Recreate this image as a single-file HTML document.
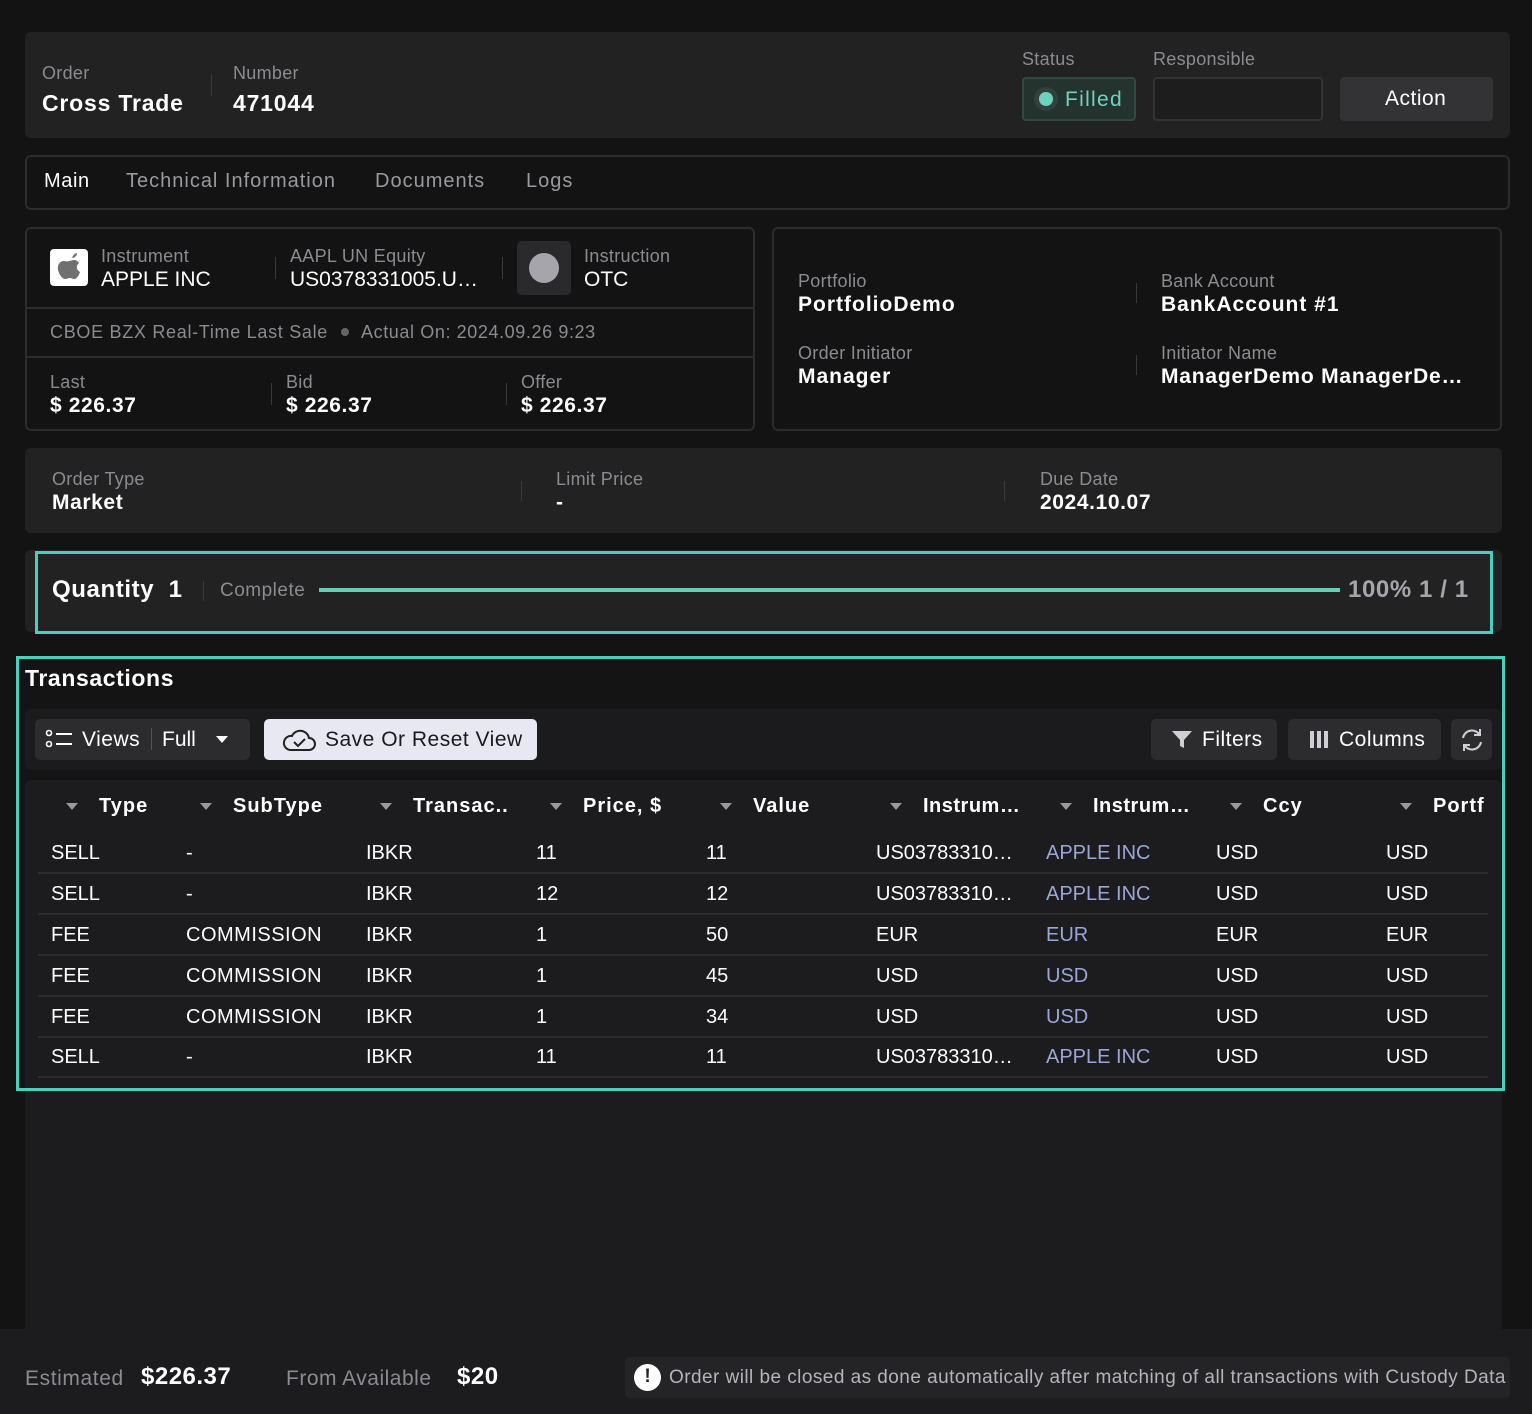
<!DOCTYPE html>
<html><head><meta charset="utf-8"><style>
*{margin:0;padding:0;box-sizing:border-box}
body{width:1532px;height:1414px;background:#131313;font-family:"Liberation Sans",sans-serif;color:#fff;position:relative;overflow:hidden}
.a{position:absolute}
.t{position:absolute;white-space:nowrap;line-height:1}
.l{color:#8b8b90;font-size:18px;letter-spacing:0.3px}
.v{font-weight:bold;font-size:21px;color:#fff;letter-spacing:0.6px}
.sep{position:absolute;width:1px;background:#3a3a3d}
.h{font-weight:bold;font-size:20px;color:#fff;letter-spacing:1px}
.c{font-size:20px;color:#fff}
.lk{color:#9aa6d8}
.arr{position:absolute;width:0;height:0;border-left:6px solid transparent;border-right:6px solid transparent;border-top:7px solid #9a9a9e}
.rl{position:absolute;left:38px;width:1450px;height:2px;background:#2c2c2f}
.tab{font-size:20px;color:#9a9a9e;letter-spacing:0.6px}
</style></head><body>
<!-- header -->
<div class="a" style="left:25px;top:32px;width:1485px;height:106px;background:#222;border-radius:6px"></div>
<div class="t l" style="left:42px;top:64px">Order</div>
<div class="t v" style="left:42px;top:92px;font-size:23px;letter-spacing:0.8px">Cross Trade</div>
<div class="sep" style="left:211px;top:74px;height:22px"></div>
<div class="t l" style="left:233px;top:64px">Number</div>
<div class="t v" style="left:233px;top:92px;font-size:23px;letter-spacing:0.8px">471044</div>
<div class="t l" style="left:1022px;top:50px">Status</div>
<div class="t l" style="left:1153px;top:50px">Responsible</div>
<div class="a" style="left:1022px;top:77px;width:114px;height:44px;background:#25332f;border:2px solid #2f4a43;border-radius:4px"></div>
<div class="a" style="left:1034px;top:87px;width:24px;height:24px;border-radius:50%;background:#31413d"></div>
<div class="a" style="left:1039px;top:92px;width:14px;height:14px;border-radius:50%;background:#6dd3c0"></div>
<div class="t" style="left:1065px;top:89px;font-size:21px;color:#6dd3c0;letter-spacing:1.3px">Filled</div>
<div class="a" style="left:1153px;top:77px;width:170px;height:44px;border:2px solid #333;border-radius:4px;background:#1d1d1d"></div>
<div class="a" style="left:1340px;top:77px;width:153px;height:44px;background:#333335;border-radius:4px"></div>
<div class="t" style="left:1385px;top:88px;font-size:21px;color:#fff;letter-spacing:0.5px">Action</div>
<!-- tabs -->
<div class="a" style="left:25px;top:155px;width:1485px;height:55px;border:2px solid #2c2c2c;border-radius:6px"></div>
<div class="t tab" style="left:44px;top:171px;color:#fff">Main</div>
<div class="t tab" style="left:126px;top:171px;letter-spacing:1px">Technical Information</div>
<div class="t tab" style="left:375px;top:171px;letter-spacing:1px">Documents</div>
<div class="t tab" style="left:526px;top:171px;letter-spacing:1px">Logs</div>
<!-- instrument box -->
<div class="a" style="left:25px;top:227px;width:730px;height:204px;border:2px solid #2c2c2c;border-radius:6px"></div>
<div class="a" style="left:27px;top:307px;width:726px;height:2px;background:#2c2c2c"></div>
<div class="a" style="left:27px;top:356px;width:726px;height:2px;background:#2c2c2c"></div>
<div class="a" style="left:50px;top:249px;width:38px;height:37px;background:#fff;border-radius:4px"></div>
<svg class="a" style="left:52px;top:250px" width="34" height="35" viewBox="0 0 34 35"><path d="M21 6c1-2 3-3 4-3 0 2-1 4-4 5-1 0-1-1 0-2z M17 11c2 0 3-1 5-1 2 0 4 1 5 3-3 2-3 7 1 9-1 3-3 7-6 7-2 0-2-1-4-1s-3 1-5 1c-3 0-6-5-7-9-1-5 2-9 6-9 2 0 3 1 5 0z" fill="#707070"/></svg>
<div class="t l" style="left:101px;top:247px">Instrument</div>
<div class="t" style="left:101px;top:269px;font-size:21px">APPLE INC</div>
<div class="sep" style="left:275px;top:257px;height:22px"></div>
<div class="t l" style="left:290px;top:247px">AAPL UN Equity</div>
<div class="t" style="left:290px;top:269px;font-size:21px">US0378331005.U…</div>
<div class="sep" style="left:502px;top:257px;height:22px"></div>
<div class="a" style="left:517px;top:241px;width:54px;height:54px;background:#2a2a2c;border-radius:5px"></div>
<div class="a" style="left:529px;top:253px;width:30px;height:30px;background:#a5a5ab;border-radius:50%"></div>
<div class="t l" style="left:584px;top:247px">Instruction</div>
<div class="t" style="left:584px;top:269px;font-size:21px">OTC</div>
<div class="t l" style="left:50px;top:323px;letter-spacing:0.7px">CBOE BZX Real-Time Last Sale</div>
<div class="a" style="left:341px;top:328px;width:8px;height:8px;border-radius:50%;background:#666"></div>
<div class="t l" style="left:361px;top:323px;letter-spacing:0.6px">Actual On: 2024.09.26 9:23</div>
<div class="t l" style="left:50px;top:373px">Last</div>
<div class="t v" style="left:50px;top:395px">$ 226.37</div>
<div class="sep" style="left:271px;top:383px;height:22px"></div>
<div class="t l" style="left:286px;top:373px">Bid</div>
<div class="t v" style="left:286px;top:395px">$ 226.37</div>
<div class="sep" style="left:506px;top:383px;height:22px"></div>
<div class="t l" style="left:521px;top:373px">Offer</div>
<div class="t v" style="left:521px;top:395px">$ 226.37</div>
<!-- portfolio box -->
<div class="a" style="left:772px;top:227px;width:730px;height:204px;border:2px solid #2c2c2c;border-radius:6px"></div>
<div class="t l" style="left:798px;top:272px">Portfolio</div>
<div class="t v" style="left:798px;top:294px;letter-spacing:1px">PortfolioDemo</div>
<div class="sep" style="left:1136px;top:283px;height:20px"></div>
<div class="t l" style="left:1161px;top:272px">Bank Account</div>
<div class="t v" style="left:1161px;top:294px;letter-spacing:1px">BankAccount #1</div>
<div class="t l" style="left:798px;top:344px">Order Initiator</div>
<div class="t v" style="left:798px;top:366px;letter-spacing:1px">Manager</div>
<div class="sep" style="left:1136px;top:355px;height:20px"></div>
<div class="t l" style="left:1161px;top:344px">Initiator Name</div>
<div class="t v" style="left:1161px;top:366px;letter-spacing:0.8px">ManagerDemo ManagerDe…</div>
<!-- order type -->
<div class="a" style="left:25px;top:448px;width:1477px;height:85px;background:#222;border-radius:6px"></div>
<div class="t l" style="left:52px;top:470px">Order Type</div>
<div class="t v" style="left:52px;top:492px">Market</div>
<div class="sep" style="left:521px;top:481px;height:20px"></div>
<div class="t l" style="left:556px;top:470px">Limit Price</div>
<div class="t v" style="left:556px;top:492px">-</div>
<div class="sep" style="left:1004px;top:481px;height:20px"></div>
<div class="t l" style="left:1040px;top:470px">Due Date</div>
<div class="t v" style="left:1040px;top:492px">2024.10.07</div>
<!-- quantity -->
<div class="a" style="left:25px;top:550px;width:1477px;height:82px;background:#222;border-radius:6px"></div>
<div class="a" style="left:35px;top:551px;width:1458px;height:83px;border:3px solid #4ecdbd"></div>
<div class="t" style="left:52px;top:578px;font-size:24px;font-weight:bold;letter-spacing:0.6px">Quantity&nbsp;&nbsp;1</div>
<div class="sep" style="left:203px;top:581px;height:20px"></div>
<div class="t l" style="left:220px;top:581px;font-size:19px;letter-spacing:0.5px">Complete</div>
<div class="a" style="left:319px;top:588px;width:1021px;height:4px;background:#6dc9b6"></div>
<div class="t" style="left:1348px;top:578px;font-size:24px;font-weight:bold;color:#a5a5ab;letter-spacing:0.6px">100% 1 / 1</div>
<!-- lower panel bg -->
<div class="a" style="left:25px;top:1090px;width:1477px;height:260px;background:#1c1c1e"></div>
<!-- transactions -->
<div class="a" style="left:16px;top:656px;width:1489px;height:435px;border:3px solid #4ecdbd;background:#141414"></div>
<div class="t" style="left:25px;top:667px;font-size:23px;font-weight:bold;letter-spacing:0.6px">Transactions</div>
<div class="a" style="left:25px;top:709px;width:1477px;height:61px;background:#1b1b1d;border-radius:6px"></div>
<div class="a" style="left:35px;top:719px;width:215px;height:41px;background:#2c2c2e;border-radius:5px"></div>
<svg class="a" style="left:45px;top:729px" width="30" height="22" viewBox="0 0 30 22"><circle cx="4" cy="4" r="2.5" fill="none" stroke="#fff" stroke-width="1.6"/><circle cx="4" cy="15" r="2.5" fill="none" stroke="#fff" stroke-width="1.6"/><path d="M11 5h16M11 15h16" stroke="#fff" stroke-width="2"/></svg>
<div class="t" style="left:82px;top:729px;font-size:21px;letter-spacing:0.5px">Views</div>
<div class="sep" style="left:151px;top:728px;height:22px;background:#555"></div>
<div class="t" style="left:162px;top:729px;font-size:21px">Full</div>
<div class="arr" style="left:216px;top:736px;border-top-color:#fff"></div>
<div class="a" style="left:264px;top:719px;width:273px;height:41px;background:#e8e8f3;border-radius:5px"></div>
<svg class="a" style="left:281px;top:726px" width="36" height="28" viewBox="0 0 36 28"><path d="M9 24h19a6 6 0 0 0 0-12 9 9 0 0 0-17-2A7 7 0 0 0 9 24z" fill="none" stroke="#222" stroke-width="2"/><path d="M13 16l4 4 7-7" fill="none" stroke="#222" stroke-width="2"/></svg>
<div class="t" style="left:325px;top:729px;font-size:21px;color:#1a1a1a;letter-spacing:0.5px">Save Or Reset View</div>
<div class="a" style="left:1151px;top:719px;width:126px;height:41px;background:#2c2c2e;border-radius:5px"></div>
<svg class="a" style="left:1171px;top:730px" width="22" height="20" viewBox="0 0 22 20"><path d="M1 1h20l-8 9v8l-4 -2v-6z" fill="#cfcfd3"/></svg>
<div class="t" style="left:1202px;top:729px;font-size:21px;letter-spacing:0.5px">Filters</div>
<div class="a" style="left:1288px;top:719px;width:153px;height:41px;background:#2c2c2e;border-radius:5px"></div>
<svg class="a" style="left:1309px;top:730px" width="20" height="19" viewBox="0 0 20 19"><rect x="1" y="1" width="4" height="17" fill="#cfcfd3"/><rect x="8" y="1" width="4" height="17" fill="#cfcfd3"/><rect x="15" y="1" width="4" height="17" fill="#cfcfd3"/></svg>
<div class="t" style="left:1339px;top:729px;font-size:21px;letter-spacing:0.5px">Columns</div>
<div class="a" style="left:1451px;top:719px;width:41px;height:41px;background:#2c2c2e;border-radius:5px"></div>
<svg class="a" style="left:1459px;top:727px" width="26" height="26" viewBox="0 0 26 26"><path d="M4 11a9 9 0 0 1 16-4M22 15a9 9 0 0 1-16 4" fill="none" stroke="#cfcfd3" stroke-width="2"/><path d="M21 2v6h-6M5 24v-6h6" fill="none" stroke="#cfcfd3" stroke-width="2"/></svg>
<!-- table -->
<div class="a" style="left:25px;top:780px;width:1477px;height:550px;background:#1c1c1e;border-radius:6px 6px 0 0"></div>
<div class="a" style="left:16px;top:780px;width:3px;height:311px;background:#4ecdbd"></div>
<div class="a" style="left:1502px;top:780px;width:3px;height:311px;background:#4ecdbd"></div>
<div class="a" style="left:16px;top:1088px;width:1489px;height:3px;background:#4ecdbd"></div>
<div class="arr" style="left:66px;top:803px"></div><div class="t h" style="left:99px;top:796px">Type</div>
<div class="arr" style="left:200px;top:803px"></div><div class="t h" style="left:233px;top:796px">SubType</div>
<div class="arr" style="left:380px;top:803px"></div><div class="t h" style="left:413px;top:796px">Transac..</div>
<div class="arr" style="left:550px;top:803px"></div><div class="t h" style="left:583px;top:796px">Price, $</div>
<div class="arr" style="left:720px;top:803px"></div><div class="t h" style="left:753px;top:796px">Value</div>
<div class="arr" style="left:890px;top:803px"></div><div class="t h" style="left:923px;top:796px;letter-spacing:0.5px">Instrum…</div>
<div class="arr" style="left:1060px;top:803px"></div><div class="t h" style="left:1093px;top:796px;letter-spacing:0.5px">Instrum…</div>
<div class="arr" style="left:1230px;top:803px"></div><div class="t h" style="left:1263px;top:796px">Ccy</div>
<div class="arr" style="left:1400px;top:803px"></div><div class="t h" style="left:1433px;top:796px">Portf</div>

<div class="t c" style="left:51px;top:843px">SELL</div><div class="t c" style="left:186px;top:843px">-</div><div class="t c" style="left:366px;top:843px">IBKR</div><div class="t c" style="left:536px;top:843px">11</div><div class="t c" style="left:706px;top:843px">11</div><div class="t c" style="left:876px;top:843px">US03783310…</div><div class="t c lk" style="left:1046px;top:843px">APPLE INC</div><div class="t c" style="left:1216px;top:843px">USD</div><div class="t c" style="left:1386px;top:843px">USD</div>
<div class="rl" style="top:872px"></div>
<div class="t c" style="left:51px;top:884px">SELL</div><div class="t c" style="left:186px;top:884px">-</div><div class="t c" style="left:366px;top:884px">IBKR</div><div class="t c" style="left:536px;top:884px">12</div><div class="t c" style="left:706px;top:884px">12</div><div class="t c" style="left:876px;top:884px">US03783310…</div><div class="t c lk" style="left:1046px;top:884px">APPLE INC</div><div class="t c" style="left:1216px;top:884px">USD</div><div class="t c" style="left:1386px;top:884px">USD</div>
<div class="rl" style="top:913px"></div>
<div class="t c" style="left:51px;top:925px">FEE</div><div class="t c" style="left:186px;top:925px;letter-spacing:0.5px">COMMISSION</div><div class="t c" style="left:366px;top:925px">IBKR</div><div class="t c" style="left:536px;top:925px">1</div><div class="t c" style="left:706px;top:925px">50</div><div class="t c" style="left:876px;top:925px">EUR</div><div class="t c lk" style="left:1046px;top:925px">EUR</div><div class="t c" style="left:1216px;top:925px">EUR</div><div class="t c" style="left:1386px;top:925px">EUR</div>
<div class="rl" style="top:954px"></div>
<div class="t c" style="left:51px;top:966px">FEE</div><div class="t c" style="left:186px;top:966px;letter-spacing:0.5px">COMMISSION</div><div class="t c" style="left:366px;top:966px">IBKR</div><div class="t c" style="left:536px;top:966px">1</div><div class="t c" style="left:706px;top:966px">45</div><div class="t c" style="left:876px;top:966px">USD</div><div class="t c lk" style="left:1046px;top:966px">USD</div><div class="t c" style="left:1216px;top:966px">USD</div><div class="t c" style="left:1386px;top:966px">USD</div>
<div class="rl" style="top:995px"></div>
<div class="t c" style="left:51px;top:1007px">FEE</div><div class="t c" style="left:186px;top:1007px;letter-spacing:0.5px">COMMISSION</div><div class="t c" style="left:366px;top:1007px">IBKR</div><div class="t c" style="left:536px;top:1007px">1</div><div class="t c" style="left:706px;top:1007px">34</div><div class="t c" style="left:876px;top:1007px">USD</div><div class="t c lk" style="left:1046px;top:1007px">USD</div><div class="t c" style="left:1216px;top:1007px">USD</div><div class="t c" style="left:1386px;top:1007px">USD</div>
<div class="rl" style="top:1036px"></div>
<div class="t c" style="left:51px;top:1047px">SELL</div><div class="t c" style="left:186px;top:1047px">-</div><div class="t c" style="left:366px;top:1047px">IBKR</div><div class="t c" style="left:536px;top:1047px">11</div><div class="t c" style="left:706px;top:1047px">11</div><div class="t c" style="left:876px;top:1047px">US03783310…</div><div class="t c lk" style="left:1046px;top:1047px">APPLE INC</div><div class="t c" style="left:1216px;top:1047px">USD</div><div class="t c" style="left:1386px;top:1047px">USD</div>
<div class="rl" style="top:1076px"></div>
<!-- footer -->
<div class="a" style="left:0;top:1329px;width:1532px;height:85px;background:#1c1c1e"></div>
<div class="t" style="left:25px;top:1368px;font-size:21px;color:#8b8b90;letter-spacing:0.6px">Estimated</div>
<div class="t" style="left:141px;top:1365px;font-size:24px;font-weight:bold;letter-spacing:0.5px">$226.37</div>
<div class="t" style="left:286px;top:1368px;font-size:21px;color:#8b8b90;letter-spacing:0.5px">From Available</div>
<div class="t" style="left:457px;top:1365px;font-size:24px;font-weight:bold;letter-spacing:0.5px">$20</div>
<div class="a" style="left:625px;top:1357px;width:885px;height:41px;background:#242427;border-radius:5px"></div>
<div class="a" style="left:634px;top:1364px;width:27px;height:27px;border-radius:50%;background:#fff"></div>
<div class="t" style="left:634px;top:1367px;width:27px;text-align:center;font-size:19px;font-weight:bold;color:#242427">!</div>
<div class="t" style="left:669px;top:1368px;font-size:19px;color:#b4b4b9;letter-spacing:0.45px">Order will be closed as done automatically after matching of all transactions with Custody Data</div>
</body></html>
